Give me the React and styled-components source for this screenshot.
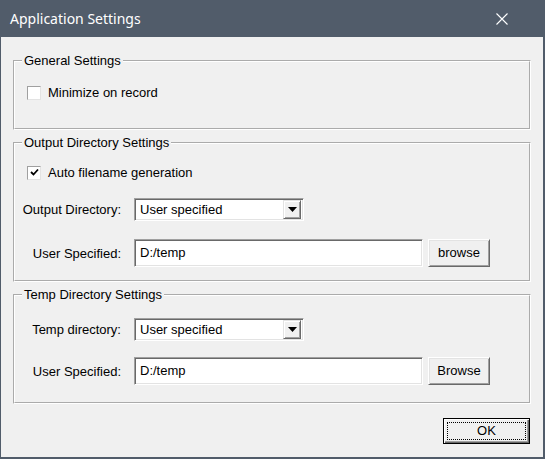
import styled, { createGlobalStyle } from "styled-components";

const GlobalStyle = createGlobalStyle`
    html, body {
        margin:0;
        padding:0;
        background:#f0f0f0;
    }
    * {
        box-sizing:border-box;
    }
`;

const Window = styled.div`
    width:545px;
    height:459px;
    display:flex;
    flex-direction:column;
    background:#f0f0f0;
    border:1px solid #515c6a;
    border-top:0;
    border-right-width:2px;
    border-bottom-width:2px;
    font-family:"Liberation Sans", Arial, sans-serif;
    font-size:13px;
    color:#000;
`;

const TitleBar = styled.div`
    height:37px;
    flex:0 0 37px;
    display:flex;
    align-items:center;
    justify-content:space-between;
    background:#515c6a;
    color:#fff;
    padding:0 35px 1px 9px;
    font-family:"Noto Sans", "Open Sans", sans-serif;
    font-size:14px;
`;

const CloseIcon = () => (
    <svg width="12" height="12" viewBox="0 0 12 12" style={{ marginTop: "2px" }}>
        <path d="M0.5 0.5 L11.5 11.5 M11.5 0.5 L0.5 11.5" stroke="#fff" strokeWidth="1.1" fill="none"/>
    </svg>
);

const Body = styled.div`
    flex:1;
    display:flex;
    flex-direction:column;
    gap:5px;
    padding:16px 12px 0 12px;
`;

const Group = styled.fieldset`
    margin:0;
    border:2px groove #fff;
    padding:${p => p.$top}px 12px ${p => p.$bottom}px 7px;
    min-width:0;
`;

const Legend = styled.legend`
    padding:0 2px;
    line-height:15px;
`;

const Row = styled.div`
    display:flex;
    align-items:center;
    margin-top:${p => p.$gap || 0}px;
`;

const CheckRow = styled.label`
    display:flex;
    align-items:center;
    height:15px;
    gap:7px;
    padding-left:5px;
`;

const Box = styled.span`
    width:14px;
    height:14px;
    display:flex;
    align-items:center;
    justify-content:center;
    background:#fff;
    border:1px solid #a0a0a0;
    border-right-color:#e3e3e3;
    border-bottom-color:#e3e3e3;
`;

const Checkbox = ({ checked }) => (
    <Box>
        {checked && (
            <svg width="9" height="9" viewBox="0 0 9 9">
                <path d="M1 4 L3.5 6.5 L8 1.5" stroke="#000" strokeWidth="1.8" fill="none"/>
            </svg>
        )}
    </Box>
);

const FieldLabel = styled.span`
    flex:0 0 99px;
    display:flex;
    justify-content:flex-end;
    white-space:nowrap;
    margin-right:13px;
`;

const Sunken = styled.div`
    background:#fff;
    border:1px solid #a0a0a0;
    border-right-color:#fff;
    border-bottom-color:#fff;
    box-shadow:inset 1px 1px 0 #696969, inset -1px -1px 0 #e3e3e3;
`;

const Select = styled(Sunken)`
    width:170px;
    height:23px;
    display:flex;
    align-items:center;
    justify-content:space-between;
    padding:2px 2px 2px 5px;
`;

const DropButton = styled.span`
    width:18px;
    height:19px;
    display:flex;
    align-items:center;
    justify-content:center;
    background:#f0f0f0;
    border:1px solid #e3e3e3;
    border-right-color:#696969;
    border-bottom-color:#696969;
    box-shadow:inset 1px 1px 0 #fff, inset -1px -1px 0 #a0a0a0;
`;

const Arrow = () => (
    <svg width="9" height="5" viewBox="0 0 9 5">
        <path d="M0 0 H9 L4.5 5 Z" fill="#000"/>
    </svg>
);

const TextBox = styled(Sunken)`
    width:289px;
    height:28px;
    display:flex;
    align-items:center;
    padding:0 5px 1px;
`;

const Button = styled.button`
    font:inherit;
    color:#000;
    width:${p => p.$w}px;
    height:${p => p.$h}px;
    margin-left:${p => p.$ml || 0}px;
    padding:0 0 2px;
    background:#f0f0f0;
    border:1px solid ${p => p.$default ? "#000" : "#fff"};
    ${p => p.$default ? "" : "border-right-color:#696969; border-bottom-color:#696969;"}
    box-shadow:${p => p.$default
        ? "inset 1px 1px 0 #fff, inset -1px -1px 0 #696969, inset -2px -2px 0 #a0a0a0"
        : "inset 1px 1px 0 #e3e3e3, inset -1px -1px 0 #a0a0a0"};
    ${p => p.$default ? "outline:1px dotted #000; outline-offset:-5px;" : ""}
`;

const Footer = styled.div`
    display:flex;
    justify-content:flex-end;
    padding:9px 1px 0 0;
`;

const SelectField = ({ label }) => (
    <>
        <FieldLabel>{label}</FieldLabel>
        <Select>
            <span>User specified</span>
            <DropButton><Arrow/></DropButton>
        </Select>
    </>
);

const App = () => {
    return (
        <Window>
            <GlobalStyle/>
            <TitleBar>
                <span>Application Settings</span>
                <CloseIcon/>
            </TitleBar>
            <Body>
                <Group $top={17} $bottom={28}>
                    <Legend>General Settings</Legend>
                    <CheckRow><Checkbox/>Minimize on record</CheckRow>
                </Group>
                <Group $top={15} $bottom={13}>
                    <Legend>Output Directory Settings</Legend>
                    <CheckRow><Checkbox checked/>Auto filename generation</CheckRow>
                    <Row $gap={18}>
                        <SelectField label="Output Directory:"/>
                    </Row>
                    <Row $gap={18}>
                        <FieldLabel>User Specified:</FieldLabel>
                        <TextBox>D:/temp</TextBox>
                        <Button $w={62} $h={28} $ml={5}>browse</Button>
                    </Row>
                </Group>
                <Group $top={16} $bottom={17}>
                    <Legend>Temp Directory Settings</Legend>
                    <Row>
                        <SelectField label="Temp directory:"/>
                    </Row>
                    <Row $gap={16}>
                        <FieldLabel>User Specified:</FieldLabel>
                        <TextBox>D:/temp</TextBox>
                        <Button $w={62} $h={28} $ml={5}>Browse</Button>
                    </Row>
                </Group>
                <Footer>
                    <Button $w={87} $h={26} $default>OK</Button>
                </Footer>
            </Body>
        </Window>
    );
};

export default App;
